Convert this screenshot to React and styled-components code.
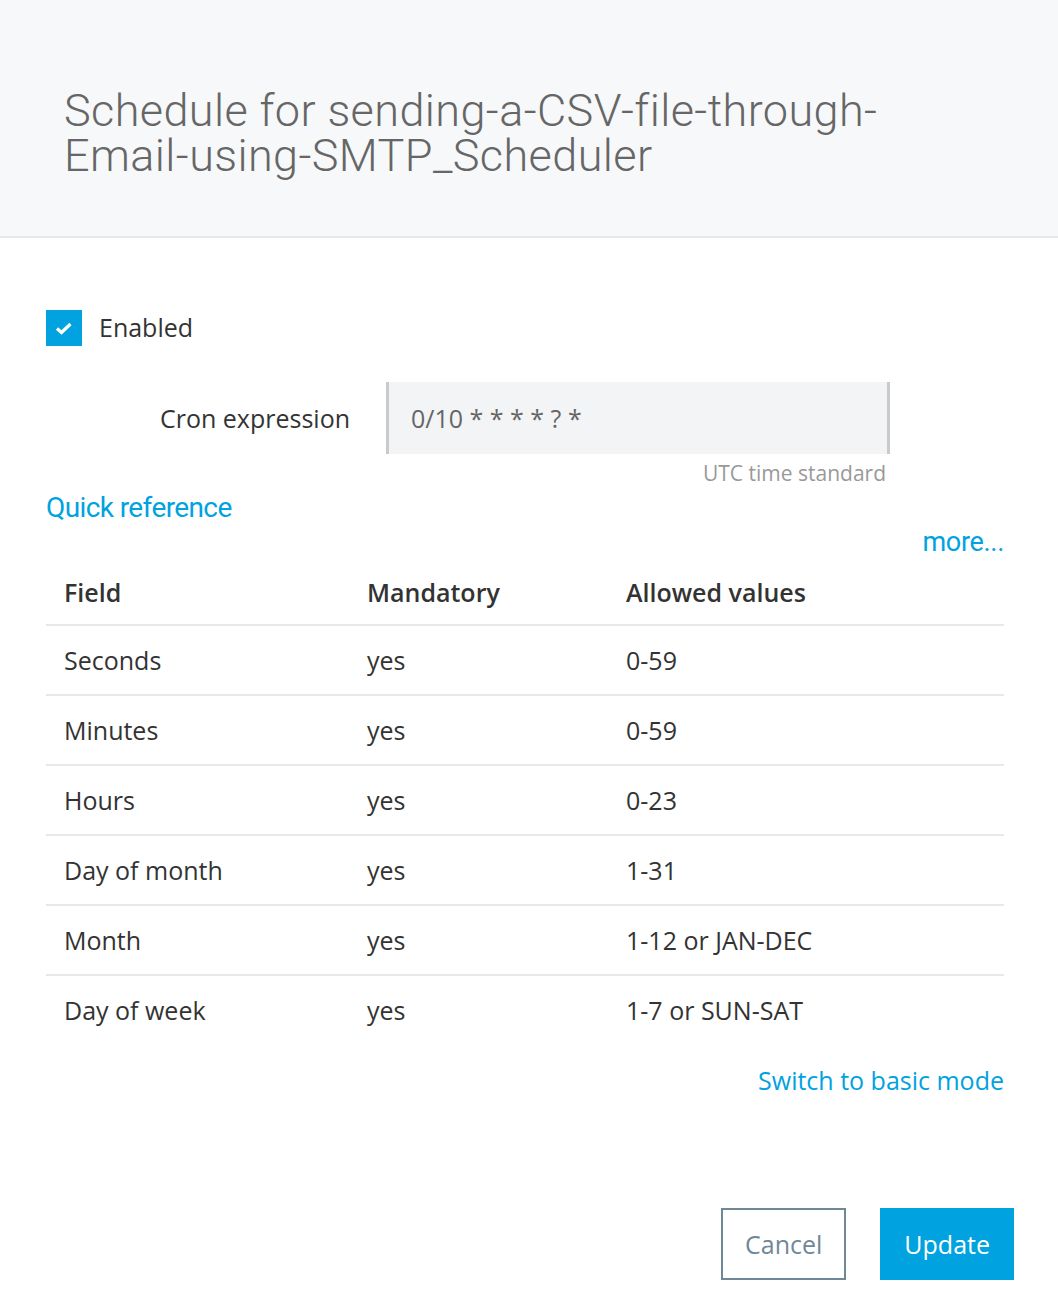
import styled, { createGlobalStyle } from 'styled-components';

const blue = '#00a2df';

const rows = [
	{ field: 'Seconds', mandatory: 'yes', values: '0-59' },
	{ field: 'Minutes', mandatory: 'yes', values: '0-59' },
	{ field: 'Hours', mandatory: 'yes', values: '0-23' },
	{ field: 'Day of month', mandatory: 'yes', values: '1-31' },
	{ field: 'Month', mandatory: 'yes', values: '1-12 or JAN-DEC' },
	{ field: 'Day of week', mandatory: 'yes', values: '1-7 or SUN-SAT' },
];

export default function App() {
	return (
		<Dialog>
			<GlobalStyle />
			<Header>
				<Title>
					Schedule for sending-a-CSV-file-through-
					<br />
					Email-using-SMTP_Scheduler
				</Title>
			</Header>
			<Body>
				<CheckRow>
					<Checkbox>
						<svg width="18" height="14" viewBox="0 0 18 14">
							<path d="M2 7.5 L6.5 11.5 L15.5 3" fill="none" stroke="#fff" strokeWidth="3.2" />
						</svg>
					</Checkbox>
					<CheckLabel>Enabled</CheckLabel>
				</CheckRow>
				<CronRow>
					<CronLabel>Cron expression</CronLabel>
					<CronInput>0/10 * * * * ? *</CronInput>
				</CronRow>
				<Hint>UTC time standard</Hint>
				<SectionLink>Quick reference</SectionLink>
				<MoreLink>more...</MoreLink>
				<Table>
					<thead>
						<tr>
							<HeadCell width="303px">Field</HeadCell>
							<HeadCell width="259px">Mandatory</HeadCell>
							<HeadCell>Allowed values</HeadCell>
						</tr>
					</thead>
					<tbody>
						{rows.map((row) => (
							<Row key={row.field}>
								<Cell>{row.field}</Cell>
								<Cell>{row.mandatory}</Cell>
								<Cell>{row.values}</Cell>
							</Row>
						))}
					</tbody>
				</Table>
				<SwitchLink>Switch to basic mode</SwitchLink>
			</Body>
			<Footer>
				<Button>Cancel</Button>
				<Button primary>Update</Button>
			</Footer>
		</Dialog>
	);
}

const GlobalStyle = createGlobalStyle`
	body {
		margin: 0;
		background: #fff;
		font-family: 'Open Sans', 'Liberation Sans', sans-serif;
		color: #333;
	}
`;

const Dialog = styled.div`
	width: 1058px;
	min-height: 1314px;
	display: flex;
	flex-direction: column;
	background: #fff;
`;

const Header = styled.div`
	box-sizing: content-box;
	height: 148px;
	padding: 88px 40px 0 64px;
	background: #f7f8fa;
	border-bottom: 2px solid #e6e7e8;
`;

const Title = styled.h1`
	margin: 0;
	font-family: Roboto, 'Liberation Sans', sans-serif;
	font-weight: 300;
	font-size: 45px;
	line-height: 45px;
	letter-spacing: 0.4px;
	color: #666;
`;

const Body = styled.div`
	display: flex;
	flex-direction: column;
	padding: 72px 54px 0 46px;
`;

const CheckRow = styled.div`
	display: flex;
	align-items: center;
	gap: 17px;
`;

const Checkbox = styled.div`
	width: 36px;
	height: 36px;
	display: flex;
	align-items: center;
	justify-content: center;
	background: ${blue};
`;

const CheckLabel = styled.span`
	font-size: 25px;
	line-height: 32px;
	margin-top: -3px;
	color: #333;
`;

const CronRow = styled.div`
	display: flex;
	align-items: center;
	margin-top: 36px;
`;

const CronLabel = styled.label`
	width: 340px;
	padding-right: 36px;
	box-sizing: border-box;
	text-align: right;
	font-size: 25px;
	color: #333;
`;

const CronInput = styled.div`
	width: 504px;
	height: 72px;
	box-sizing: border-box;
	display: flex;
	align-items: center;
	padding-left: 22px;
	background: #f3f4f6;
	border-left: 3px solid #c9cacb;
	border-right: 3px solid #c9cacb;
	font-size: 25px;
	color: #666;
`;

const Hint = styled.div`
	width: 840px;
	margin-top: 6px;
	text-align: right;
	font-size: 21px;
	line-height: 26px;
	color: #999;
`;

const SectionLink = styled.a`
	margin-top: 5px;
	align-self: flex-start;
	font-family: Roboto, 'Liberation Sans', sans-serif;
	font-size: 28px;
	line-height: 34px;
	letter-spacing: -0.6px;
	color: ${blue};
`;

const MoreLink = styled.a`
	align-self: flex-end;
	font-family: Roboto, 'Liberation Sans', sans-serif;
	font-size: 27px;
	line-height: 34px;
	letter-spacing: -0.3px;
	color: ${blue};
`;

const Table = styled.table`
	width: 100%;
	margin-top: 0;
	border-collapse: collapse;
	table-layout: fixed;
`;

const HeadCell = styled.th`
	width: ${(props) => props.width || 'auto'};
	box-sizing: border-box;
	height: 66px;
	padding: 0 0 0 18px;
	text-align: left;
	font-size: 25px;
	font-weight: 600;
	color: #333;
	border-bottom: 2px solid #e8e8e8;
`;

const Row = styled.tr`
	& + & td {
		border-top: 2px solid #e8e8e8;
	}
`;

const Cell = styled.td`
	height: 68px;
	padding: 0 0 0 18px;
	font-size: 25px;
	color: #333;
`;

const SwitchLink = styled.a`
	align-self: flex-end;
	margin-top: 20px;
	font-size: 25px;
	line-height: 32px;
	color: ${blue};
`;

const Footer = styled.div`
	display: flex;
	justify-content: flex-end;
	gap: 34px;
	padding: 112px 44px 0 0;
`;

const Button = styled.button`
	height: 72px;
	padding: 0 22px;
	font-family: 'Open Sans', 'Liberation Sans', sans-serif;
	font-size: 25px;
	border: 2px solid ${(props) => (props.primary ? blue : '#6f8898')};
	background: ${(props) => (props.primary ? blue : '#fff')};
	color: ${(props) => (props.primary ? '#fff' : '#6f8898')};
	cursor: pointer;
`;
